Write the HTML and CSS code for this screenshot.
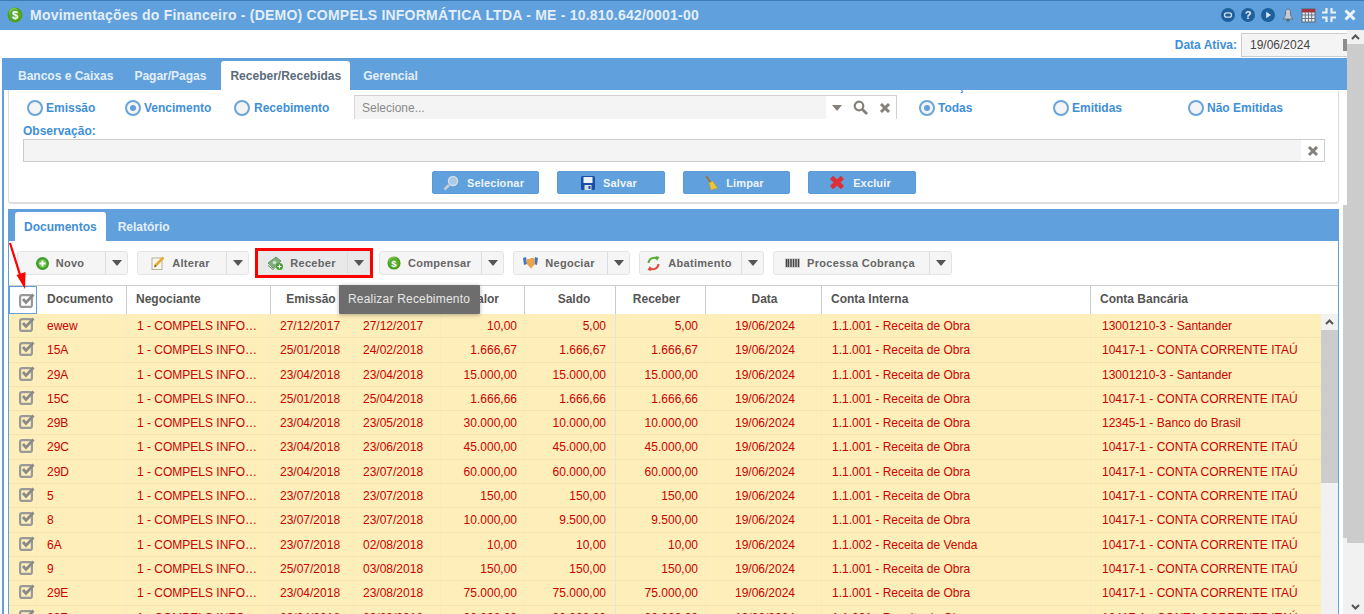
FILE: index.html
```html
<!DOCTYPE html>
<html lang="pt-BR">
<head>
<meta charset="utf-8">
<title>Movimentações do Financeiro</title>
<link rel="stylesheet" href="styles.css">
</head>
<body>
<svg class="defs" width="0" height="0" aria-hidden="true">
  <defs>
    <symbol id="chk" viewBox="0 0 16 16">
      <rect x="1.100" y="3.100" width="11.800" height="11.800" rx="2" fill="none" stroke="#999" stroke-width="2.200"/>
      <path d="M4 7 7 10.500 14.500 2.500" fill="none" stroke="#8a8a8a" stroke-width="2.800"/>
    </symbol>
    <symbol id="coin" viewBox="0 0 16 16">
      <circle cx="8" cy="8" r="7.5" fill="#4d9e22"/>
      <circle cx="7" cy="6" r="5" fill="#86c94f"/>
      <circle cx="8" cy="8" r="5.8" fill="#58ad2b"/>
      <text x="8" y="12" text-anchor="middle" class="coin-t">$</text>
    </symbol>
    <symbol id="x-gray" viewBox="0 0 12 12">
      <path d="M2 2 10 10M10 2 2 10" stroke="#85807a" stroke-width="3"/>
    </symbol>
    <symbol id="caret" viewBox="0 0 10 6">
      <path d="M0 0H10L5 6Z" fill="currentColor"/>
    </symbol>
  </defs>
</svg>
<div class="app">
  <header class="titlebar">
    <svg class="title-coin" width="16" height="16"><use href="#coin"/></svg>
    <h1 class="title">Movimentações do Financeiro - (DEMO) COMPELS INFORMÁTICA LTDA - ME - 10.810.642/0001-00</h1>
    <div class="title-icons">
      <svg width="14" height="14" viewBox="0 0 14 14"><circle cx="7" cy="7" r="7" fill="#1d609c"/><rect x="3.500" y="4.800" width="7" height="4.400" rx="2.200" fill="none" stroke="#cfe0f0" stroke-width="1.300"/></svg>
      <svg width="14" height="14" viewBox="0 0 14 14"><circle cx="7" cy="7" r="7" fill="#1d609c"/><text x="7" y="11" text-anchor="middle" class="q-t">?</text></svg>
      <svg width="14" height="14" viewBox="0 0 14 14"><circle cx="7" cy="7" r="7" fill="#1d609c"/><path d="M5.200 3.800 10 7 5.200 10.200Z" fill="#dbe8f4"/></svg>
      <svg width="14" height="14" viewBox="0 0 14 14"><path d="M7 1C5 1 4.500 3 4.500 5 4.500 8 3.500 9.500 2 11H12C10.500 9.500 9.500 8 9.500 5 9.500 3 9 1 7 1Z" fill="#c3ccd4" stroke="#59636d" stroke-width=".8"/><rect x="5.500" y="11.500" width="3" height="2" fill="#59636d"/></svg>
      <svg width="15" height="15" viewBox="0 0 15 15"><rect x="1" y="1" width="13" height="13" fill="#e8eef4" stroke="#5d6670"/><rect x="1" y="1" width="13" height="3.500" fill="#a8343c"/><path d="M1 7H14M1 10.500H14M4.300 4V14M7.500 4V14M10.700 4V14" stroke="#6c7782" stroke-width="1"/></svg>
      <svg width="14" height="14" viewBox="0 0 14 14"><path d="M4.500 0V4.500H0M9.500 0V4.500H14M4.500 14V9.500H0M9.500 14V9.500H14" fill="none" stroke="#e9f1f9" stroke-width="2.200"/></svg>
      <svg class="title-x" width="12" height="12" viewBox="0 0 12 12"><path d="M1.500 1.500 10.500 10.500M10.500 1.500 1.500 10.500" stroke="#eef4fa" stroke-width="3"/></svg>
    </div>
  </header>
  <div class="body-row">
    <main class="main">
      <div class="date-row">
        <label class="date-label">Data Ativa:</label>
        <div class="date-input"><span>19/06/2024</span><i class="date-cal"></i></div>
      </div>
      <nav class="top-tabs">
        <span class="top-tab tab-first">Bancos e Caixas</span>
        <span class="top-tab">Pagar/Pagas</span>
        <span class="top-tab is-active">Receber/Recebidas</span>
        <span class="top-tab">Gerencial</span>
      </nav>
      <div class="workspace">
        <section class="filter-panel">
          <div class="radio-row">
            <label class="radio r-emissao"><i class="dot"></i>Emissão</label>
            <label class="radio r-venc"><i class="dot is-on"></i>Vencimento</label>
            <label class="radio r-receb"><i class="dot"></i>Recebimento</label>
            <div class="select">
              <span class="select-field">Selecione...</span>
              <span class="select-tools">
                <svg width="10" height="6"><use href="#caret"/></svg>
                <svg width="15" height="15" viewBox="0 0 15 15"><circle cx="6" cy="6" r="4.300" fill="none" stroke="#85807a" stroke-width="2.200"/><path d="M9.500 9.500 14 14" stroke="#85807a" stroke-width="2.800"/></svg>
                <svg width="12" height="12"><use href="#x-gray"/></svg>
              </span>
            </div>
            <div class="radio-group">
              <span class="group-label">Situação:</span>
              <label class="radio r-w1"><i class="dot is-on"></i>Todas</label>
              <label class="radio r-w2"><i class="dot"></i>Emitidas</label>
              <label class="radio"><i class="dot"></i>Não Emitidas</label>
            </div>
          </div>
          <label class="obs-label">Observação:</label>
          <div class="obs-input"><span class="obs-clear"><svg width="12" height="12"><use href="#x-gray"/></svg></span></div>
          <div class="actions">
            <button class="action a-w1"><svg width="16" height="16" viewBox="0 0 16 16"><path d="M6 10 1.500 14.500" stroke="#c4ced6" stroke-width="2.500"/><circle cx="10" cy="6" r="4.500" fill="#a9cbe6" stroke="#d5dde3" stroke-width="1.500"/></svg>Selecionar</button>
            <button class="action a-w2"><svg width="14" height="14" viewBox="0 0 14 14"><rect width="14" height="14" rx="1.500" fill="#1a4fa8"/><rect x="2.500" y="1" width="9" height="6" fill="#eef3f8"/><rect x="3.500" y="9" width="7" height="5" fill="#d7dde3"/><rect x="7.500" y="10" width="2" height="3" fill="#1a4fa8"/></svg>Salvar</button>
            <button class="action a-w1"><svg width="13" height="16" viewBox="0 0 13 16"><path d="M1 1 6 8" stroke="#a36a2c" stroke-width="1.600"/><path d="M4 8 7.500 6 12.500 13 6 15Z" fill="#e9c63c" stroke="#c59a20" stroke-width=".6"/></svg>Limpar</button>
            <button class="action a-w2"><svg width="16" height="15" viewBox="0 0 16 15"><path d="M2.500 2.500 13.500 12.500M13.500 2.500 2.500 12.500" stroke="#df2f36" stroke-width="4.500"/></svg>Excluir</button>
          </div>
        </section>
        <section class="docs-panel">
          <nav class="doc-tabs">
            <span class="doc-tab is-active">Documentos</span>
            <span class="doc-tab">Relatório</span>
          </nav>
          <div class="toolbar">
            <div class="tbtn w-novo"><span class="tbtn-main"><svg width="13" height="13" viewBox="0 0 13 13"><circle cx="6.500" cy="6.500" r="6.500" fill="#3f9f2b"/><circle cx="6.500" cy="6.500" r="4.200" fill="#72c34e"/><path d="M6.500 3.500V9.500M3.500 6.500H9.500" stroke="#fff" stroke-width="1.800"/></svg>Novo</span><span class="tbtn-caret"><svg width="10" height="6"><use href="#caret"/></svg></span></div>
            <div class="tbtn w-alt"><span class="tbtn-main"><svg width="14" height="14" viewBox="0 0 14 14"><rect x="1" y="2" width="10" height="11.500" fill="#fbf7ea" stroke="#b5b0a4"/><path d="M4 10 12.500 1.500" stroke="#e6a92f" stroke-width="2.500"/><path d="M3 11.500 4 8.800 5.500 10.300Z" fill="#6a5130"/></svg>Alterar</span><span class="tbtn-caret"><svg width="10" height="6"><use href="#caret"/></svg></span></div>
            <div class="tbtn w-rec is-pressed"><span class="tbtn-main"><svg width="16" height="14" viewBox="0 0 16 14"><path d="M1 7 9 1 14 5 6 12Z" fill="#7fae7f" stroke="#5b8b5b" stroke-width=".8"/><path d="M1 9.500 6 13.500 12 8" fill="none" stroke="#5b8b5b" stroke-width="1"/><circle cx="7.500" cy="6.500" r="1.800" fill="#cfe3cf"/><circle cx="12.500" cy="10.500" r="3.500" fill="#3f9f2b"/><path d="M12.500 8.500V12.500M10.500 10.500H14.500" stroke="#fff" stroke-width="1.200"/></svg>Receber</span><span class="tbtn-caret"><svg width="10" height="6"><use href="#caret"/></svg></span></div>
            <div class="tbtn w-comp"><span class="tbtn-main"><svg width="14" height="14"><use href="#coin"/></svg>Compensar</span><span class="tbtn-caret"><svg width="10" height="6"><use href="#caret"/></svg></span></div>
            <div class="tbtn w-neg"><span class="tbtn-main"><svg width="15" height="12" viewBox="0 0 15 12"><path d="M0 1 3 0 4 7 1 8Z" fill="#3f78c4"/><path d="M15 1 12 0 11 7 14 8Z" fill="#3f78c4"/><path d="M3.500 2H6.500L8 1H11.500L12 7 8 11.500 3.800 7Z" fill="#eda34a"/></svg>Negociar</span><span class="tbtn-caret"><svg width="10" height="6"><use href="#caret"/></svg></span></div>
            <div class="tbtn w-aba"><span class="tbtn-main"><svg width="15" height="15" viewBox="0 0 15 15"><path d="M2.500 7A5.500 5.500 0 0 1 11 2.800" fill="none" stroke="#58ad3a" stroke-width="2"/><path d="M9.500 0 13.500 1 11 5Z" fill="#58ad3a"/><path d="M12.500 8A5.500 5.500 0 0 1 4 12.200" fill="none" stroke="#dd4b39" stroke-width="2"/><path d="M5.500 15 1.500 14 4 10Z" fill="#dd4b39"/></svg>Abatimento</span><span class="tbtn-caret"><svg width="10" height="6"><use href="#caret"/></svg></span></div>
            <div class="tbtn w-proc"><span class="tbtn-main"><svg width="15" height="10" viewBox="0 0 15 10"><rect width="15" height="10" fill="#d8d8d8"/><path d="M1.500 1V9M3.500 1V9M6 1V9M8.500 1V9M11 1V9M13.500 1V9" stroke="#444" stroke-width="1.500"/></svg>Processa Cobrança</span><span class="tbtn-caret"><svg width="10" height="6"><use href="#caret"/></svg></span></div>
          </div>
          <div class="grid-head cols">
            <span class="h h-chk"><svg width="16" height="16"><use href="#chk"/></svg></span>
            <span class="h h-doc">Documento</span>
            <span class="h">Negociante</span>
            <span class="h h-c h-emis">Emissão</span>
            <span class="h h-c">Vencimento</span>
            <span class="h h-valor">Valor</span>
            <span class="h h-c h-saldo">Saldo</span>
            <span class="h h-c h-rec">Receber</span>
            <span class="h h-c h-data">Data</span>
            <span class="h">Conta Interna</span>
            <span class="h">Conta Bancária</span>
          </div>
          <div class="grid-body">
            <div class="rows">
              <div class="row cols"><span class="c c-chk"><svg width="16" height="16"><use href="#chk"/></svg></span><span class="c">ewew</span><span class="c c-neg">1 - COMPELS INFORMÁTICA LTDA - ME</span><span class="c c-d">27/12/2017</span><span class="c c-d">27/12/2017</span><span class="c c-r">10,00</span><span class="c c-r c-saldo">5,00</span><span class="c c-r">5,00</span><span class="c c-data">19/06/2024</span><span class="c c-ci">1.1.001 - Receita de Obra</span><span class="c c-cb">13001210-3 - Santander</span></div>
              <div class="row cols"><span class="c c-chk"><svg width="16" height="16"><use href="#chk"/></svg></span><span class="c">15A</span><span class="c c-neg">1 - COMPELS INFORMÁTICA LTDA - ME</span><span class="c c-d">25/01/2018</span><span class="c c-d">24/02/2018</span><span class="c c-r">1.666,67</span><span class="c c-r c-saldo">1.666,67</span><span class="c c-r">1.666,67</span><span class="c c-data">19/06/2024</span><span class="c c-ci">1.1.001 - Receita de Obra</span><span class="c c-cb">10417-1 - CONTA CORRENTE ITAÚ</span></div>
              <div class="row cols"><span class="c c-chk"><svg width="16" height="16"><use href="#chk"/></svg></span><span class="c">29A</span><span class="c c-neg">1 - COMPELS INFORMÁTICA LTDA - ME</span><span class="c c-d">23/04/2018</span><span class="c c-d">23/04/2018</span><span class="c c-r">15.000,00</span><span class="c c-r c-saldo">15.000,00</span><span class="c c-r">15.000,00</span><span class="c c-data">19/06/2024</span><span class="c c-ci">1.1.001 - Receita de Obra</span><span class="c c-cb">13001210-3 - Santander</span></div>
              <div class="row cols"><span class="c c-chk"><svg width="16" height="16"><use href="#chk"/></svg></span><span class="c">15C</span><span class="c c-neg">1 - COMPELS INFORMÁTICA LTDA - ME</span><span class="c c-d">25/01/2018</span><span class="c c-d">25/04/2018</span><span class="c c-r">1.666,66</span><span class="c c-r c-saldo">1.666,66</span><span class="c c-r">1.666,66</span><span class="c c-data">19/06/2024</span><span class="c c-ci">1.1.001 - Receita de Obra</span><span class="c c-cb">10417-1 - CONTA CORRENTE ITAÚ</span></div>
              <div class="row cols"><span class="c c-chk"><svg width="16" height="16"><use href="#chk"/></svg></span><span class="c">29B</span><span class="c c-neg">1 - COMPELS INFORMÁTICA LTDA - ME</span><span class="c c-d">23/04/2018</span><span class="c c-d">23/05/2018</span><span class="c c-r">30.000,00</span><span class="c c-r c-saldo">10.000,00</span><span class="c c-r">10.000,00</span><span class="c c-data">19/06/2024</span><span class="c c-ci">1.1.001 - Receita de Obra</span><span class="c c-cb">12345-1 - Banco do Brasil</span></div>
              <div class="row cols"><span class="c c-chk"><svg width="16" height="16"><use href="#chk"/></svg></span><span class="c">29C</span><span class="c c-neg">1 - COMPELS INFORMÁTICA LTDA - ME</span><span class="c c-d">23/04/2018</span><span class="c c-d">23/06/2018</span><span class="c c-r">45.000,00</span><span class="c c-r c-saldo">45.000,00</span><span class="c c-r">45.000,00</span><span class="c c-data">19/06/2024</span><span class="c c-ci">1.1.001 - Receita de Obra</span><span class="c c-cb">10417-1 - CONTA CORRENTE ITAÚ</span></div>
              <div class="row cols"><span class="c c-chk"><svg width="16" height="16"><use href="#chk"/></svg></span><span class="c">29D</span><span class="c c-neg">1 - COMPELS INFORMÁTICA LTDA - ME</span><span class="c c-d">23/04/2018</span><span class="c c-d">23/07/2018</span><span class="c c-r">60.000,00</span><span class="c c-r c-saldo">60.000,00</span><span class="c c-r">60.000,00</span><span class="c c-data">19/06/2024</span><span class="c c-ci">1.1.001 - Receita de Obra</span><span class="c c-cb">10417-1 - CONTA CORRENTE ITAÚ</span></div>
              <div class="row cols"><span class="c c-chk"><svg width="16" height="16"><use href="#chk"/></svg></span><span class="c">5</span><span class="c c-neg">1 - COMPELS INFORMÁTICA LTDA - ME</span><span class="c c-d">23/07/2018</span><span class="c c-d">23/07/2018</span><span class="c c-r">150,00</span><span class="c c-r c-saldo">150,00</span><span class="c c-r">150,00</span><span class="c c-data">19/06/2024</span><span class="c c-ci">1.1.001 - Receita de Obra</span><span class="c c-cb">10417-1 - CONTA CORRENTE ITAÚ</span></div>
              <div class="row cols"><span class="c c-chk"><svg width="16" height="16"><use href="#chk"/></svg></span><span class="c">8</span><span class="c c-neg">1 - COMPELS INFORMÁTICA LTDA - ME</span><span class="c c-d">23/07/2018</span><span class="c c-d">23/07/2018</span><span class="c c-r">10.000,00</span><span class="c c-r c-saldo">9.500,00</span><span class="c c-r">9.500,00</span><span class="c c-data">19/06/2024</span><span class="c c-ci">1.1.001 - Receita de Obra</span><span class="c c-cb">10417-1 - CONTA CORRENTE ITAÚ</span></div>
              <div class="row cols"><span class="c c-chk"><svg width="16" height="16"><use href="#chk"/></svg></span><span class="c">6A</span><span class="c c-neg">1 - COMPELS INFORMÁTICA LTDA - ME</span><span class="c c-d">23/07/2018</span><span class="c c-d">02/08/2018</span><span class="c c-r">10,00</span><span class="c c-r c-saldo">10,00</span><span class="c c-r">10,00</span><span class="c c-data">19/06/2024</span><span class="c c-ci">1.1.002 - Receita de Venda</span><span class="c c-cb">10417-1 - CONTA CORRENTE ITAÚ</span></div>
              <div class="row cols"><span class="c c-chk"><svg width="16" height="16"><use href="#chk"/></svg></span><span class="c">9</span><span class="c c-neg">1 - COMPELS INFORMÁTICA LTDA - ME</span><span class="c c-d">25/07/2018</span><span class="c c-d">03/08/2018</span><span class="c c-r">150,00</span><span class="c c-r c-saldo">150,00</span><span class="c c-r">150,00</span><span class="c c-data">19/06/2024</span><span class="c c-ci">1.1.001 - Receita de Obra</span><span class="c c-cb">10417-1 - CONTA CORRENTE ITAÚ</span></div>
              <div class="row cols"><span class="c c-chk"><svg width="16" height="16"><use href="#chk"/></svg></span><span class="c">29E</span><span class="c c-neg">1 - COMPELS INFORMÁTICA LTDA - ME</span><span class="c c-d">23/04/2018</span><span class="c c-d">23/08/2018</span><span class="c c-r">75.000,00</span><span class="c c-r c-saldo">75.000,00</span><span class="c c-r">75.000,00</span><span class="c c-data">19/06/2024</span><span class="c c-ci">1.1.001 - Receita de Obra</span><span class="c c-cb">10417-1 - CONTA CORRENTE ITAÚ</span></div>
              <div class="row cols"><span class="c c-chk"><svg width="16" height="16"><use href="#chk"/></svg></span><span class="c">29F</span><span class="c c-neg">1 - COMPELS INFORMÁTICA LTDA - ME</span><span class="c c-d">23/04/2018</span><span class="c c-d">23/09/2018</span><span class="c c-r">90.000,00</span><span class="c c-r c-saldo">90.000,00</span><span class="c c-r">90.000,00</span><span class="c c-data">19/06/2024</span><span class="c c-ci">1.1.001 - Receita de Obra</span><span class="c c-cb">10417-1 - CONTA CORRENTE ITAÚ</span></div>
            </div>
            <div class="vscroll">
              <span class="vscroll-up"><svg width="9" height="6" viewBox="0 0 9 6"><path d="M1 5 4.500 1.500 8 5" fill="none" stroke="#555" stroke-width="2"/></svg></span>
              <span class="vscroll-thumb"></span>
            </div>
          </div>
        </section>
      </div>
    </main>
    <aside class="page-scroll">
      <span class="page-up"><svg width="9" height="6" viewBox="0 0 9 6"><path d="M1 5 4.500 1.500 8 5" fill="none" stroke="#555" stroke-width="2"/></svg></span>
      <span class="page-thumb"></span>
      <span class="page-track"><svg width="9" height="6" viewBox="0 0 9 6"><path d="M1 1 4.500 4.500 8 1" fill="none" stroke="#555" stroke-width="2"/></svg></span>
    </aside>
  </div>
  <span class="side-strip"></span>
  <div class="tooltip">Realizar Recebimento</div>
  <svg class="red-arrow" width="24" height="50" viewBox="0 0 24 50"><path d="M1 1 12 36" stroke="#f00" stroke-width="2.200"/><path d="M7.500 33 16.500 30 16 47Z" fill="#f00"/></svg>
</div>
</body>
</html>
```
FILE: styles.css
```css
* { box-sizing: border-box; }
html, body { margin: 0; height: 100%; overflow: hidden; background: #fff; }
body { font-family: "Liberation Sans", Arial, sans-serif; font-size: 12px; }
.defs { position: absolute; }
.coin-t { font: bold 11px "Liberation Sans", sans-serif; fill: #fff; }
.q-t { font: bold 11px "Liberation Sans", sans-serif; fill: #e6eff7; }

.app { position: relative; width: 1364px; height: 614px; overflow: hidden; display: flex; flex-direction: column; }

.titlebar { height: 30px; flex: none; background: #5fa0dd; border-top: 1px solid #3a7cb5; display: flex; align-items: center; padding: 0 8px 1px 7px; }
.title-coin { flex: none; }
.title { margin: 0 0 0 7px; font-size: 14px; font-weight: bold; color: #e4eef8; letter-spacing: .22px; white-space: nowrap; flex: 1; }
.title-icons { display: flex; align-items: center; gap: 6px; }
.title-x { margin-left: 2px; }

.body-row { flex: 1; display: flex; min-height: 0; }
.main { width: 1347px; flex: none; display: flex; flex-direction: column; min-height: 0; }

.date-row { height: 28px; flex: none; display: flex; justify-content: flex-end; align-items: center; overflow: hidden; padding-top: 1px; }
.date-label { color: #3f8fd8; font-weight: bold; font-size: 12px; margin-right: 4px; }
.date-input { width: 106px; height: 24px; border: 1px solid #ccc; border-right: 0; background: #f4f4f4; color: #444; padding-left: 8px; font-size: 12px; display: flex; align-items: center; justify-content: space-between; }
.date-cal { width: 4px; height: 12px; background: #8d8d8d; }

.top-tabs { height: 32px; flex: none; margin-left: 2px; background: #5fa0dd; display: flex; align-items: flex-end; padding-left: 7px; }
.top-tab { height: 29px; padding: 8px 9px 0; font-weight: bold; color: #e4eef8; font-size: 12px; margin-right: 4px; border-radius: 3px 3px 0 0; }
.tab-first { margin-right: 3px; }
.top-tab.is-active { background: #fff; color: #5b6b7b; margin-left: 2px; }

.workspace { flex: 1; min-height: 0; margin-left: 2px; border-left: 2px solid #5fa0dd; padding: 0 8px 0 4px; display: flex; flex-direction: column; gap: 5px; }

.filter-panel { height: 114px; flex: none; border: 1px solid #ddd; border-top: 0; border-bottom-width: 2px; padding: 5px 13px 0 14px; overflow: hidden; border-radius: 0 0 3px 3px; }
.radio-row { display: flex; align-items: flex-start; height: 29px; padding-left: 4px; }
.radio { display: flex; align-items: center; height: 25px; color: #3f8fd8; font-weight: bold; font-size: 12px; flex: none; padding-top: 1px; }
.dot { width: 16px; height: 16px; border: 2px solid #6aa5dc; border-radius: 50%; background: #f4f4f4; margin-right: 3px; display: flex; align-items: center; justify-content: center; flex: none; }
.dot.is-on::after { content: ""; width: 6px; height: 6px; border-radius: 50%; background: #5fa0dd; }
.r-emissao { width: 98px; }
.r-venc { width: 109px; }
.r-receb { width: 120px; }
.r-receb .dot { margin-right: 4px; }
.select { width: 543px; height: 24px; border: 1px solid #d0d0d0; border-bottom: 0; border-left-color: #d8d8d8; display: flex; flex: none; }
.select-field { width: 471px; background: #f4f4f4; color: #8a8a8a; padding: 5px 0 0 7px; }
.select-tools { flex: 1; display: flex; align-items: center; padding-left: 6px; gap: 11px; color: #85807a; }
.radio-group { position: relative; display: flex; margin-left: 22px; flex: none; }
.group-label { position: absolute; left: 10px; top: -16px; color: #3f8fd8; font-weight: bold; }
.r-w1 { width: 134px; }
.r-w2 { width: 135px; }
.obs-label { display: block; color: #3f8fd8; font-weight: bold; font-size: 12px; line-height: 14px; height: 15px; }
.obs-input { height: 23px; border: 1px solid #ccc; background: #f4f4f4; display: flex; justify-content: flex-end; }
.obs-clear { width: 23px; background: #fff; display: flex; align-items: center; justify-content: center; }
.actions { display: flex; justify-content: center; gap: 18px; margin-top: 9px; }
.action { height: 23px; border: 1px solid #5a9ad6; border-radius: 2px; background: #5fa0dd; color: #eef4fa; font: bold 11px "Liberation Sans", sans-serif; letter-spacing: .15px; display: flex; align-items: center; justify-content: center; gap: 8px; padding: 0 4px 0 0; }
.a-w1 { width: 107px; }
.a-w2 { width: 108px; }

.docs-panel { flex: 1; min-height: 0; border: 1px solid #5fa0dd; border-bottom: 0; overflow: hidden; display: flex; flex-direction: column; }
.doc-tabs { height: 31px; flex: none; background: #5fa0dd; display: flex; align-items: flex-end; padding-left: 6px; }
.doc-tab { height: 29px; padding: 8px 9px 0; font-weight: bold; color: #e4eef8; margin-right: 3px; border-radius: 3px 3px 0 0; }
.doc-tab.is-active { background: #fff; color: #3f8fd8; }

.toolbar { height: 44px; flex: none; padding: 10px 0 0 8px; display: flex; gap: 9px; }
.tbtn { height: 24px; flex: none; display: flex; background: #f5f5f5; border: 1px solid #e4e4e4; border-radius: 3px; color: #666; font-weight: bold; font-size: 11px; letter-spacing: .3px; }
.tbtn-main { flex: 1; display: flex; align-items: center; justify-content: center; gap: 7px; padding-right: 3px; }
.tbtn-caret { width: 22px; flex: none; border-left: 1px solid #ddd; display: flex; align-items: center; justify-content: center; color: #555; }
.w-novo { width: 111px; }
.w-alt { width: 112px; }
.w-rec { width: 112px; }
.w-comp { width: 125px; }
.w-neg { width: 117px; }
.w-aba { width: 125px; }
.w-proc { width: 179px; }
.is-pressed { background: #e9e9e9; outline: 3px solid #f00; border-radius: 0; }

.cols { display: grid; grid-template-columns: 28px 90px 144px 83px 87px 84px 91px 90px 116px 269px 1fr; }
.grid-head { height: 29px; flex: none; border-top: 1px solid #ccc; }
.h { border-right: 1px solid #ccc; color: #555; font-weight: bold; padding: 6px 0 0 9px; white-space: nowrap; overflow: hidden; font-size: 12px; }
.h:last-child { border-right: 0; }
.h-chk { outline: 1px solid #5fa0dd; outline-offset: -1px; padding: 6px 0 0 10px; }
.h-doc { padding-left: 10px; }
.h-c { text-align: center; padding-left: 0; }
.h-emis { padding-right: 2px; }
.h-saldo { padding-left: 8px; }
.h-rec { padding-right: 8px; }
.h-data { padding-left: 2px; }
.h-valor { text-align: right; padding: 6px 25px 0 0; }

.grid-body { flex: 1; min-height: 0; display: flex; overflow: hidden; }
.rows { width: 1312px; flex: none; background: #fdeeba; }
.row { height: 24.3px; border-bottom: 1px solid #f6e4ae; color: #cc0000; font-size: 12px; }
.c { padding: 5px 0 0 10px; white-space: nowrap; overflow: hidden; border-right: 1px solid #f8ebc4; }
.c:last-child { border-right: 0; }
.c-chk { padding: 2px 0 0 10px; }
.c-neg { padding-right: 12px; text-overflow: ellipsis; }
.c-d { padding-left: 9px; }
.c-r { text-align: right; padding: 5px 7px 0 0; }
.c-saldo { padding-right: 9px; border-right-color: #dfe3ee; }
.c-data { text-align: center; padding-left: 3px; }
.c-ci { padding-left: 10px; }
.c-cb { padding-left: 11px; }

.vscroll { width: 17px; flex: none; background: #f1f1f1; display: flex; flex-direction: column; }
.vscroll-up { height: 16px; flex: none; display: flex; align-items: center; justify-content: center; }
.vscroll-thumb { height: 153px; flex: none; background: #ccc; }

.page-scroll { width: 17px; flex: none; background: #f1f1f1; display: flex; flex-direction: column; }
.page-up { height: 14px; flex: none; display: flex; justify-content: center; align-items: center; }
.page-thumb { height: 499px; flex: none; background: #ccc; }
.page-track { flex: 1; display: flex; justify-content: center; align-items: flex-end; padding-bottom: 4px; }

.side-strip { position: absolute; left: 1343px; top: 205px; width: 4px; height: 409px; background: linear-gradient(#ccc 0 333px, #f1f1f1 333px); }
.tooltip { position: absolute; left: 339px; top: 285px; width: 141px; height: 29px; background: #6d6d6d; color: #e6e6e6; font-size: 12px; line-height: 29px; padding-left: 9px; letter-spacing: .2px; box-shadow: 0 1px 4px rgba(0,0,0,.3); border-radius: 1px; }
.red-arrow { position: absolute; left: 9px; top: 242px; }
```
